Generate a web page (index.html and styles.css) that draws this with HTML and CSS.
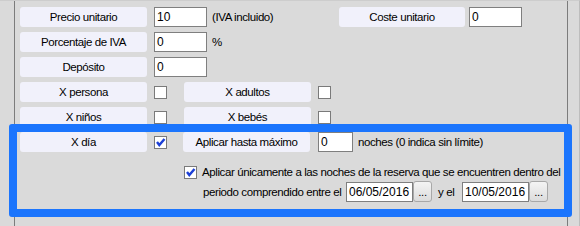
FILE: index.html
```html
<!DOCTYPE html>
<html lang="es">
<head>
<meta charset="utf-8">
<title>Precio</title>
<link rel="stylesheet" href="styles.css">
</head>
<body>
<div class="frame">
  <div class="panel">
    <div class="row">
      <div class="btn">Precio unitario</div>
      <div class="input w53">10</div>
      <span class="label lbl-iva">(IVA incluido)</span>
      <div class="btn btn-coste">Coste unitario</div>
      <div class="input w53">0</div>
    </div>
    <div class="row">
      <div class="btn">Porcentaje de IVA</div>
      <div class="input w53">0</div>
      <span class="label">%</span>
    </div>
    <div class="row">
      <div class="btn">Depósito</div>
      <div class="input w53">0</div>
    </div>
    <div class="row">
      <div class="btn">X persona</div>
      <span class="check"></span>
      <div class="btn btn-col3">X adultos</div>
      <span class="check"></span>
    </div>
    <div class="row">
      <div class="btn">X niños</div>
      <span class="check"></span>
      <div class="btn btn-col3">X bebés</div>
      <span class="check"></span>
    </div>
    <div class="row">
      <div class="btn">X día</div>
      <span class="check checked"><svg viewBox="0 0 11 11" width="11" height="11"><path d="M2 5 L4.3 8 L9.5 2" fill="none" stroke="#1c3fd6" stroke-width="2.4"/></svg></span>
      <div class="btn btn-max">Aplicar hasta máximo</div>
      <div class="input w35">0</div>
      <span class="label lbl-noches">noches (0 indica sin límite)</span>
    </div>
    <div class="row row-text">
      <span class="check checked chk-only"><svg viewBox="0 0 11 11" width="11" height="11"><path d="M2 5 L4.3 8 L9.5 2" fill="none" stroke="#1c3fd6" stroke-width="2.4"/></svg></span>
      <span class="label lbl-only">Aplicar únicamente a las noches de la reserva que se encuentren dentro del</span>
    </div>
    <div class="row row-dates">
      <span class="label lbl-period">periodo comprendido entre el</span>
      <div class="input w67">06/05/2016</div>
      <div class="dots">...</div>
      <span class="label lbl-yel">y el</span>
      <div class="input w67">10/05/2016</div>
      <div class="dots">...</div>
    </div>
  </div>
  <div class="highlight"></div>
</div>
</body>
</html>
```

FILE: styles.css
```css
html, body {
  margin: 0;
  padding: 0;
}
body {
  width: 580px;
  height: 226px;
  overflow: hidden;
  background: #dadada;
  font-family: "Liberation Sans", Arial, sans-serif;
  font-size: 11.5px;
  letter-spacing: -0.4px;
  color: #000;
}
.frame {
  position: relative;
  width: 580px;
  height: 226px;
  box-sizing: border-box;
  border-top: 1px solid #cdcdcd;
  border-right: 1px solid #bdbdbd;
  padding-left: 14px;
}
.panel {
  width: 554px;
  height: 225px;
  box-sizing: border-box;
  border-left: 1px solid #7c7c7c;
  border-right: 1px solid #7c7c7c;
  padding: 6px 0 0 5px;
  display: flex;
  flex-direction: column;
  gap: 5px;
}
.row {
  display: flex;
  align-items: center;
  height: 20px;
}
.btn {
  width: 127px;
  height: 20px;
  box-sizing: border-box;
  background: #f1f1fb;
  border-radius: 3px;
  display: flex;
  align-items: center;
  justify-content: center;
  margin-right: 7px;
  flex-shrink: 0;
}
.btn-coste {
  width: 126px;
  margin-right: 4px;
}
.btn-col3 {
  margin-left: 17px;
}
.btn-max {
  margin-left: 16px;
  margin-right: 8px;
}
.input {
  height: 20px;
  box-sizing: border-box;
  background: #fff;
  border: 1px solid #7f7f7f;
  padding-left: 2px;
  display: flex;
  align-items: center;
  flex-shrink: 0;
  font-size: 12px;
  letter-spacing: 0;
}
.w53 { width: 53px; }
.w35 { width: 35px; }
.w67 { width: 67px; }
.label {
  white-space: nowrap;
  flex-shrink: 0;
}
.lbl-iva {
  margin-left: 5px;
  width: 127px;
}
.row .input + .label {
  margin-left: 5px;
}
.row .lbl-noches {
  margin-left: 7px;
}
.check {
  width: 13px;
  height: 13px;
  box-sizing: border-box;
  background: #fff;
  border: 1px solid #7a7a7a;
  display: inline-flex;
  align-items: center;
  justify-content: center;
  flex-shrink: 0;
}
.check svg { display: block; }
.row-text {
  margin-top: 5px;
}
.chk-only {
  margin-left: 164px;
}
.lbl-only {
  margin-left: 5px;
}
.row-dates {
  margin-top: -5px;
}
.lbl-period {
  margin-left: 183px;
  width: 143px;
}
.row .lbl-yel {
  margin-left: 6px;
  width: 24px;
}
.dots {
  width: 19px;
  height: 21px;
  box-sizing: border-box;
  border: 1px solid #a8a8a8;
  border-radius: 3px;
  background: linear-gradient(#f4f4f4, #dcdcdc);
  display: flex;
  align-items: center;
  justify-content: center;
  flex-shrink: 0;
  margin-top: -1px;
}
.highlight {
  position: absolute;
  left: 9px;
  top: 123px;
  width: 563px;
  height: 93px;
  box-sizing: border-box;
  border: 8px solid #1b75fd;
  border-radius: 3px;
  pointer-events: none;
}
```
